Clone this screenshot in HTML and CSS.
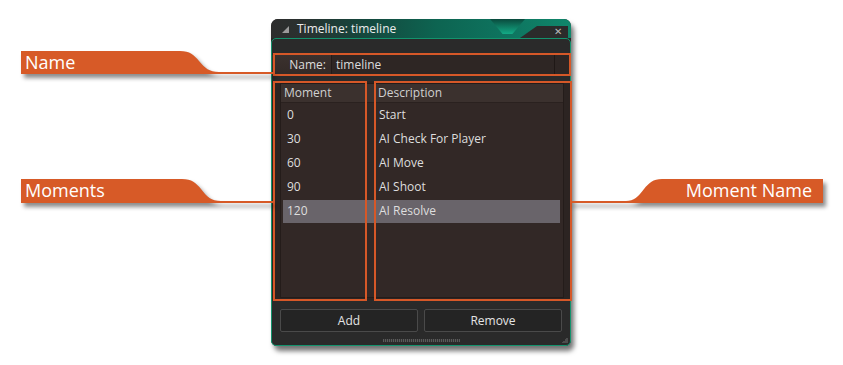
FILE: index.html
```html
<!DOCTYPE html>
<html>
<head>
<title>Timeline: timeline</title>
<link rel="stylesheet" href="styles.css">
</head>
<body>
  <div class="stage">
    <div class="window">
      <div class="titlebar">
        <svg class="title-arrow" width="7" height="7" viewBox="0 0 7 7"><polygon points="7,0 7,7 0,7" fill="#9a9a9a"/></svg>
        <span class="title-text">Timeline: timeline</span>
        <span class="close">&#x2715;</span>
      </div>
      <div class="panel">
        <div class="name-row">
          <span class="name-label">Name:</span>
          <span class="name-input">timeline</span>
          <span class="name-end"></span>
        </div>
        <div class="list-area">
          <div class="list">
            <div class="list-head"><span>Moment</span><span>Description</span></div>
            <div class="list-row"><span>0</span><span>Start</span></div>
            <div class="list-row"><span>30</span><span>AI Check For Player</span></div>
            <div class="list-row"><span>60</span><span>AI Move</span></div>
            <div class="list-row"><span>90</span><span>AI Shoot</span></div>
            <div class="list-row selected"><span>120</span><span>AI Resolve</span></div>
          </div>
        </div>
        <div class="buttons">
          <button class="btn">Add</button>
          <button class="btn">Remove</button>
        </div>
        <div class="grip"></div>
        <div class="resize"></div>
      </div>

      <!-- annotation boxes -->
      <div class="mark mark-name"></div>
      <div class="mark mark-moment"></div>
      <div class="mark mark-desc"></div>
    </div>
  </div>

  <!-- callout tabs -->
  <div class="callout callout-name">
    <svg width="252" height="23" viewBox="0 0 252 23"><path d="M0 0 H159 C169 0 173 4 178 10 C184 17 188 21 198 21 H252 V23 H0 Z"/></svg>
    <span class="callout-text">Name</span>
  </div>
  <div class="callout callout-moments">
    <svg width="252" height="24" viewBox="0 0 252 24"><path d="M0 0 H161 C171 0 175 4 180 10 C186 18 190 22 200 22 H252 V24 H0 Z"/></svg>
    <span class="callout-text">Moments</span>
  </div>
  <div class="callout callout-mname">
    <svg width="253" height="24" viewBox="0 0 253 24"><path d="M253 0 H92 C83 0 79 4 74 10 C68 18 64 22 56 22 H0 V24 H253 Z"/></svg>
    <span class="callout-text">Moment Name</span>
  </div>
</body>
</html>
```

FILE: styles.css
```css
body {
  margin: 0;
  background-color: #fff;
  font-family: 'Open Sans', 'Noto Sans', sans-serif;
  position: relative;
  width: 843px;
  height: 365px;
  overflow: hidden;
}

.stage {
  padding: 19px 0 0 271px;
}

/* Dialog window */
.window {
  position: relative;
  width: 300px;
  height: 327px;
  background-color: #252525;
  border-radius: 7px 7px 6px 6px;
  box-shadow: 3px 5px 5px rgba(0, 0, 0, 0.55);
}

.titlebar {
  position: relative;
  height: 19px;
  display: flex;
  align-items: center;
  padding-left: 11px;
  border-radius: 7px 7px 0 0;
  background: linear-gradient(90deg, #2d2d2d 0%, #2a302f 10%, #15463c 30%, #0d6451 55%, #0e7560 80%, #10876b 100%);
  color: #ececec;
  font-size: 12px;
}

/* notch in the title bar */
.titlebar::before {
  content: "";
  position: absolute;
  left: 219px;
  top: 0;
  width: 35px;
  height: 15px;
  background: linear-gradient(#0a4a3d, #13ab86);
  clip-path: polygon(0 0, 100% 0, 64% 100%, 36% 100%);
}

/* dark right corner with the close button */
.titlebar::after {
  content: "";
  position: absolute;
  left: 249px;
  top: 7px;
  width: 48px;
  height: 12px;
  background-color: #2b2b2b;
  clip-path: polygon(17px 0, 100% 0, 100% 100%, 0 100%);
}

.title-arrow {
  margin-right: 8px;
  margin-top: 2px;
}

.close {
  position: relative;
  z-index: 1;
  margin-left: auto;
  margin-right: 9px;
  margin-top: 4px;
  font-size: 10px;
  color: #b8b8b8;
}

.panel {
  position: relative;
  height: 290px;
  padding-top: 16px;
  border: 1px solid #13936d;
  border-radius: 5px;
  background-color: #2a2a2a;
  display: flex;
  flex-direction: column;
}

/* Name row */
.name-row {
  display: grid;
  grid-template-columns: 59px 1fr 16px;
  height: 20px;
  font-size: 12px;
  color: #dcdcdc;
}

.name-label {
  background: linear-gradient(#3b312e, #332a27);
  text-align: right;
  padding-right: 5px;
  line-height: 20px;
}

.name-input {
  background-color: #2e2624;
  border-left: 1px solid #231b19;
  padding-left: 4px;
  line-height: 20px;
}

.name-end {
  background-color: #2e2624;
  border-left: 1px solid #1f1816;
}

/* List */
.list-area {
  margin-top: 6px;
  height: 219px;
  box-sizing: border-box;
  padding: 2px 6px 2px 8px;
  background-color: #2c2422;
}

.list {
  height: 100%;
  box-sizing: border-box;
  background-color: #322826;
  border: 1px solid #241c1a;
  font-size: 12px;
  color: #dedede;
}

.list-head {
  display: grid;
  grid-template-columns: 92px 1fr;
  height: 18px;
  line-height: 17px;
  background-color: #3b312e;
  border-bottom: 1px solid #2a211f;
  color: #d0d0d0;
}

.list-head span:first-child {
  padding-left: 3px;
}

.list-head span:last-child {
  padding-left: 5px;
}

.list-row {
  display: grid;
  grid-template-columns: 92px 1fr;
  height: 24px;
  line-height: 24px;
  margin: 0 3px 0 1px;
}

.list-row span {
  padding-left: 5px;
}

.list-row.selected {
  grid-template-columns: 91px 1fr;
  background-color: #69646a;
  margin: 1px 3px 0 2px;
  height: 23px;
  line-height: 22px;
}

.list-row.selected span:first-child {
  padding-left: 4px;
}

/* Buttons */
.buttons {
  display: grid;
  grid-template-columns: 1fr 1fr;
  gap: 6px;
  padding: 0 8px;
  margin-top: 9px;
}

.btn {
  height: 23px;
  background-color: #242424;
  border: 1px solid #4a4a4a;
  border-radius: 2px;
  color: #e4e4e4;
  font-family: 'Open Sans', 'Noto Sans', sans-serif;
  font-size: 12px;
  padding: 0;
}

.grip {
  width: 77px;
  height: 3px;
  margin: 7px auto 0 auto;
  background-image: repeating-linear-gradient(90deg, #5a5a5a 0 1px, #333 1px 2px);
}

.resize {
  position: absolute;
  right: 2px;
  bottom: 2px;
  width: 6px;
  height: 6px;
  background: linear-gradient(135deg, transparent 50%, #555 50%);
  opacity: 0.8;
}

/* Orange annotation boxes */
.mark {
  position: absolute;
  border: 2px solid #d65828;
  box-sizing: border-box;
}

.mark-name {
  left: 2px;
  top: 34px;
  width: 298px;
  height: 23px;
}

.mark-moment {
  left: 2px;
  top: 62px;
  width: 94px;
  height: 220px;
}

.mark-desc {
  left: 103px;
  top: 62px;
  width: 198px;
  height: 220px;
}

/* Callouts */
.callout {
  position: absolute;
}

.callout svg {
  display: block;
  fill: #d75a27;
  filter: drop-shadow(3px 4px 2px rgba(0, 0, 0, 0.45));
}

.callout-text {
  position: absolute;
  top: 0;
  color: #fff;
  font-size: 18px;
  line-height: 23px;
}

.callout-name {
  left: 21px;
  top: 51px;
}

.callout-name .callout-text {
  left: 4px;
}

.callout-moments {
  left: 21px;
  top: 179px;
}

.callout-moments .callout-text {
  left: 4px;
}

.callout-mname {
  left: 570px;
  top: 179px;
}

.callout-mname .callout-text {
  right: 11px;
}
```
